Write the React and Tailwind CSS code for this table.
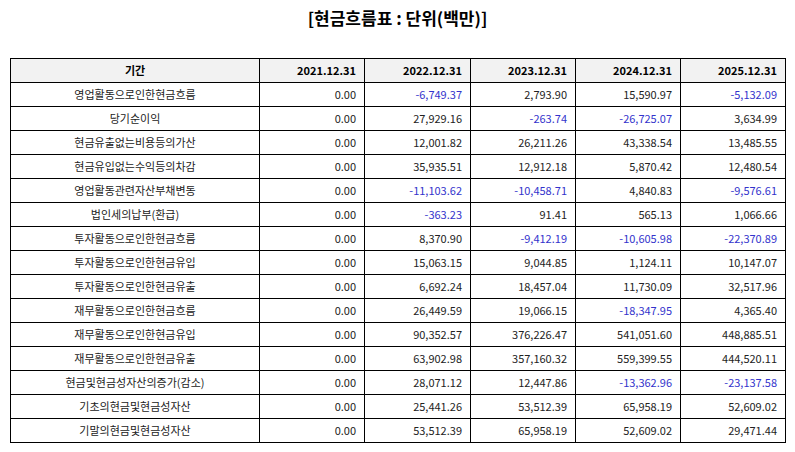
const years = ["2021.12.31", "2022.12.31", "2023.12.31", "2024.12.31", "2025.12.31"];

const rows = [
	["영업활동으로인한현금흐름", "0.00", "-6,749.37", "2,793.90", "15,590.97", "-5,132.09"],
	["당기순이익", "0.00", "27,929.16", "-263.74", "-26,725.07", "3,634.99"],
	["현금유출없는비용등의가산", "0.00", "12,001.82", "26,211.26", "43,338.54", "13,485.55"],
	["현금유입없는수익등의차감", "0.00", "35,935.51", "12,912.18", "5,870.42", "12,480.54"],
	["영업활동관련자산부채변동", "0.00", "-11,103.62", "-10,458.71", "4,840.83", "-9,576.61"],
	["법인세의납부(환급)", "0.00", "-363.23", "91.41", "565.13", "1,066.66"],
	["투자활동으로인한현금흐름", "0.00", "8,370.90", "-9,412.19", "-10,605.98", "-22,370.89"],
	["투자활동으로인한현금유입", "0.00", "15,063.15", "9,044.85", "1,124.11", "10,147.07"],
	["투자활동으로인한현금유출", "0.00", "6,692.24", "18,457.04", "11,730.09", "32,517.96"],
	["재무활동으로인한현금흐름", "0.00", "26,449.59", "19,066.15", "-18,347.95", "4,365.40"],
	["재무활동으로인한현금유입", "0.00", "90,352.57", "376,226.47", "541,051.60", "448,885.51"],
	["재무활동으로인한현금유출", "0.00", "63,902.98", "357,160.32", "559,399.55", "444,520.11"],
	["현금및현금성자산의증가(감소)", "0.00", "28,071.12", "12,447.86", "-13,362.96", "-23,137.58"],
	["기초의현금및현금성자산", "0.00", "25,441.26", "53,512.39", "65,958.19", "52,609.02"],
	["기말의현금및현금성자산", "0.00", "53,512.39", "65,958.19", "52,609.02", "29,471.44"],
];

export default function App() {
	return (
		<div
			className="w-[795px] h-[452px] bg-white text-[#222]"
			style={{ fontFamily: '"Noto Sans CJK KR", "Noto Sans", sans-serif' }}
		>
			<h1 className="pt-[6px] h-[58px] text-center text-[17px] font-bold leading-[24px] text-black">
				[현금흐름표 : 단위(백만)]
			</h1>
			<table className="mx-[10px] w-[775px] table-fixed border-collapse text-[11px]">
				<colgroup>
					<col className="w-[249px]" />
					<col className="w-[105px]" />
					<col className="w-[106px]" />
					<col className="w-[105px]" />
					<col className="w-[105px]" />
					<col className="w-[105px]" />
				</colgroup>
				<thead>
					<tr className="h-[24px] bg-[#f2f2f2]">
						<th className="border border-black text-center font-bold p-0 text-black">기간</th>
						{years.map((y) => (
							<th key={y} className="border border-black text-right font-bold pr-[8px] p-0 text-black">
								{y}
							</th>
						))}
					</tr>
				</thead>
				<tbody>
					{rows.map(([label, ...values]) => (
						<tr key={label} className="h-[24px]">
							<td className="border border-black text-center p-0">{label}</td>
							{values.map((v, i) => (
								<td
									key={i}
									className={
										v.startsWith("-")
											? "border border-black text-right pr-[8px] text-[#3333cc]"
											: "border border-black text-right pr-[8px]"
									}
								>
									{v}
								</td>
							))}
						</tr>
					))}
				</tbody>
			</table>
		</div>
	);
}
